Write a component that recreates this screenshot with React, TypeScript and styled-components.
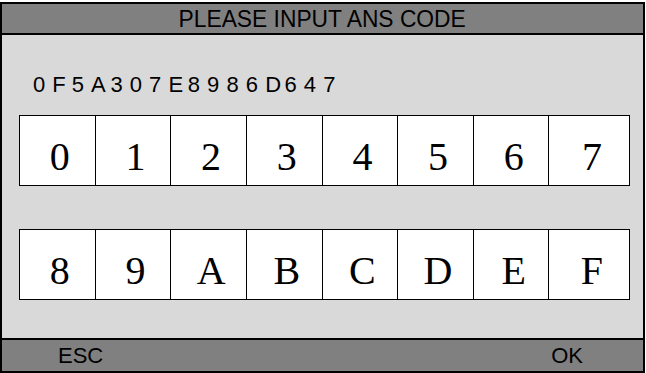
import React from 'react';
import styled, { createGlobalStyle } from 'styled-components';

const GlobalStyle = createGlobalStyle`
  html, body {
    margin: 0;
    padding: 0;
    background: #ffffff;
  }
  * { box-sizing: border-box; }
`;

const CODE = '0F5A307E8986D647';
const ROWS = [
  ['0', '1', '2', '3', '4', '5', '6', '7'],
  ['8', '9', 'A', 'B', 'C', 'D', 'E', 'F'],
];

const Frame = styled.div`
  margin-top: 2px;
  width: 645px;
  height: 371px;
  border: 2px solid #000;
  display: flex;
  flex-direction: column;
  background: #d9d9d9;
  font-family: 'Liberation Sans', Arial, sans-serif;
  color: #000;
`;

const Bar = styled.div<{ $top?: boolean }>`
  flex: none;
  height: ${(p) => (p.$top ? 31 : 33)}px;
  background: #808080;
  display: flex;
  align-items: center;
  ${(p) => (p.$top ? 'border-bottom: 2px solid #000;' : 'border-top: 2px solid #000;')}
`;

const Title = styled.div`
  flex: 1;
  text-align: center;
  font-size: 24px;
  line-height: 29px;
  span {
    display: inline-block;
    transform: scaleX(0.95);
  }
`;

const Footer = styled(Bar)`
  justify-content: space-between;
  padding: 0 60px 0 56px;
  font-size: 22px;
  line-height: 31px;
`;

const Content = styled.div`
  flex: 1;
  display: flex;
  flex-direction: column;
  padding: 38px 0 0 17px;
`;

const CodeLine = styled.div`
  display: flex;
  height: 24px;
  line-height: 24px;
  margin-left: 14px;
  font-size: 22px;
`;

const CodeChar = styled.span`
  width: 19.35px;
  flex: none;
`;

const KeyRow = styled.div<{ $gap: number }>`
  margin-top: ${(p) => p.$gap}px;
  display: grid;
  grid-template-columns: repeat(7, 75.65px) 81px;
  width: max-content;
  height: 71px;
  border: 1px solid #000;
  border-right: none;
  background: #fff;
`;

const Key = styled.div`
  display: flex;
  align-items: center;
  justify-content: center;
  border-right: 1px solid #000;
  padding: 11px 0 0 5px;
  font-family: 'Liberation Serif', 'Times New Roman', serif;
  font-size: 40px;
`;

export default function App() {
  return (
    <>
      <GlobalStyle />
      <Frame>
        <Bar $top>
          <Title>
            <span>PLEASE INPUT ANS CODE</span>
          </Title>
        </Bar>
        <Content>
          <CodeLine>
            {CODE.split('').map((c, i) => (
              <CodeChar key={i}>{c}</CodeChar>
            ))}
          </CodeLine>
          {ROWS.map((row, r) => (
            <KeyRow key={r} $gap={r === 0 ? 18 : 43}>
              {row.map((k) => (
                <Key key={k}>{k}</Key>
              ))}
            </KeyRow>
          ))}
        </Content>
        <Footer>
          <span>ESC</span>
          <span>OK</span>
        </Footer>
      </Frame>
    </>
  );
}
